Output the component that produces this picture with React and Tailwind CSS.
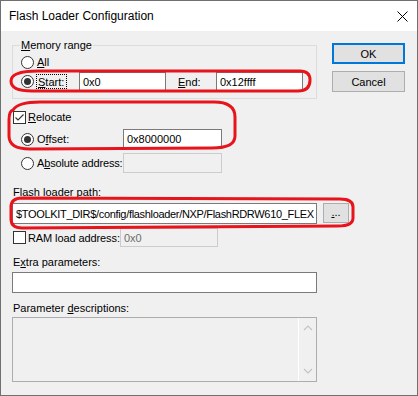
import React from 'react'

function Radio({ checked }) {
  return (
    <span className="flex h-[13px] w-[13px] shrink-0 items-center justify-center rounded-full border border-[#333333] bg-white">
      {checked && <span className="h-[7px] w-[7px] rounded-full bg-[#333333]" />}
    </span>
  )
}

function Check({ checked }) {
  return (
    <span className="flex h-[13px] w-[13px] shrink-0 items-center justify-center border border-[#333333] bg-white">
      {checked && (
        <svg width="11" height="11" viewBox="0 0 11 11">
          <path d="M1.5 5.5 L4 8 L9.5 2.5" fill="none" stroke="#333333" strokeWidth="1.1" />
        </svg>
      )}
    </span>
  )
}

function Edit({ value, disabled, className }) {
  return (
    <div
      className={
        'flex shrink-0 items-center overflow-hidden whitespace-nowrap border pl-[3px] ' +
        (disabled ? 'border-[#cccccc] bg-[#f0f0f0] text-[#6d6d6d] ' : 'border-[#7a7a7a] bg-white ') +
        className
      }
    >
      {value}
    </div>
  )
}

export default function App() {
  return (
    <div className="relative flex h-[396px] w-[418px] flex-col whitespace-nowrap border border-[#707070] bg-[#f0f0f0] font-['Liberation_Sans',Arial,sans-serif] text-[11px] leading-[16px] text-black">
      {/* Title bar */}
      <div className="flex h-[30px] shrink-0 items-center justify-between bg-white pl-[8px] pr-[9px] text-[12px]">
        <span>Flash Loader Configuration</span>
        <svg width="11" height="11" viewBox="0 0 11 11">
          <path d="M0.5 0.5 L10.5 10.5 M10.5 0.5 L0.5 10.5" stroke="#000" strokeWidth="1" />
        </svg>
      </div>

      <div className="flex">
        {/* Left column */}
        <div className="ml-[11px] flex w-[305px] flex-col">
          {/* Memory range group */}
          <div className="relative mt-[14px] flex h-[54px] flex-col border border-[#dcdcdc] pl-[8px]">
            <span className="absolute -top-[9px] left-[7px] bg-[#f0f0f0] px-[1px]">
              <span className="underline">M</span>emory range
            </span>
            <div className="mt-[8px] flex h-[16px] items-center">
              <Radio />
              <span className="ml-[3px]">
                <span className="underline">A</span>ll
              </span>
            </div>
            <div className="mt-[2px] flex h-[19px] items-center">
              <Radio checked />
              <span className="ml-[2px] flex h-[15px] w-[31px] items-center border border-dotted border-black pl-px">
                <span className="underline">S</span>tart:
              </span>
              <Edit value="0x0" className="ml-[12px] h-[19px] w-[87px]" />
              <span className="w-[50px] pl-[12px]">
                <span className="underline">E</span>nd:
              </span>
              <Edit value="0x12ffff" className="h-[19px] w-[87px]" />
            </div>
          </div>

          {/* Relocate */}
          <div className="mt-[10px] flex h-[16px] items-center">
            <span className="ml-px">
              <Check checked />
            </span>
            <span className="ml-[2px]">
              <span className="underline">R</span>elocate
            </span>
          </div>
          <div className="mt-[4px] flex h-[20px] items-center">
            <span className="ml-[9px]">
              <Radio checked />
            </span>
            <span className="ml-[3px] w-[86px]">
              O<span className="underline">f</span>fset:
            </span>
            <Edit value="0x8000000" className="h-[20px] w-[99px]" />
          </div>
          <div className="mt-[4px] flex h-[20px] items-center">
            <span className="ml-[9px]">
              <Radio />
            </span>
            <span className="ml-[3px] w-[86px] tracking-[-0.15px]">
              A<span className="underline">b</span>solute address:
            </span>
            <Edit disabled value="" className="h-[20px] w-[99px]" />
          </div>

          {/* Flash loader path */}
          <div className="mt-[11px] h-[16px] pl-px">
            Flash loader <span className="underline">p</span>ath:
          </div>
          <div className="mt-[3px] flex h-[21px] w-[337px] items-start">
            <Edit
              value="$TOOLKIT_DIR$/config/flashloader/NXP/FlashRDRW610_FLEX"
              className="h-[21px] w-[305px] pl-[2px] tracking-[-0.32px]"
            />
            <button className="ml-[6px] flex h-[20px] w-[26px] items-center justify-center border border-[#adadad] bg-[#e1e1e1] pb-[3px]">
              <span className="underline">.</span>..
            </button>
          </div>

          {/* RAM load address */}
          <div className="mt-[4px] flex h-[19px] items-center">
            <span className="ml-px">
              <Check />
            </span>
            <span className="ml-[2px] w-[92px] tracking-[-0.1px]">RAM load address:</span>
            <Edit disabled value="0x0" className="h-[19px] w-[98px]" />
          </div>

          {/* Extra parameters */}
          <div className="mt-[7px] h-[16px] pl-px">
            E<span className="underline">x</span>tra parameters:
          </div>
          <Edit value="" className="mt-[2px] h-[21px] w-[305px]" />

          {/* Parameter descriptions */}
          <div className="mt-[7px] h-[16px] pl-px">
            Parameter <span className="underline">d</span>escriptions:
          </div>
          <div className="mt-px flex h-[65px] w-[305px] border border-[#adadad] bg-[#f0f0f0]">
            <div className="flex-1" />
            <div className="flex w-[18px] flex-col items-center justify-between border-l border-white py-[7px]">
              <svg width="10" height="6" viewBox="0 0 10 6">
                <path d="M1 5 L5 1 L9 5" fill="none" stroke="#c4c4c4" strokeWidth="1.2" />
              </svg>
              <svg width="10" height="6" viewBox="0 0 10 6">
                <path d="M1 1 L5 5 L9 1" fill="none" stroke="#c4c4c4" strokeWidth="1.2" />
              </svg>
            </div>
          </div>
        </div>

        {/* Buttons */}
        <div className="ml-[15px] mt-[12px] flex w-[73px] flex-col">
          <button className="flex h-[21px] items-center justify-center border-2 border-[#0078d7] bg-[#e1e1e1]">
            OK
          </button>
          <button className="mt-[7px] flex h-[21px] items-center justify-center border border-[#adadad] bg-[#e1e1e1]">
            Cancel
          </button>
        </div>
      </div>

      {/* Red annotation marks drawn over the dialog */}
      <svg
        className="pointer-events-none absolute left-[-1px] top-[-1px]"
        width="418"
        height="396"
        viewBox="0 0 418 396"
      >
        <g fill="none" stroke="#e8141c" strokeWidth="3" strokeLinejoin="round" strokeLinecap="round">
          <path d="M38 71 L300 71 Q310 71 310 80 Q310 91 298 91 L32 91 Q11 91 11 81 Q11 71 38 71 Z" />
          <path d="M13 110 Q18 102 40 102 L214 102 Q235 102 235 117 L235 136 Q235 148 212 148 L30 149 Q9 149 9 136 L9 120 Q9 111 13 110" />
          <path d="M22 198 L340 199 Q353 199 353 207 L353 218 Q353 226 338 226 L22 228 Q11 228 11 219 L11 207 Q11 198 22 198 Z" />
        </g>
      </svg>
    </div>
  )
}
